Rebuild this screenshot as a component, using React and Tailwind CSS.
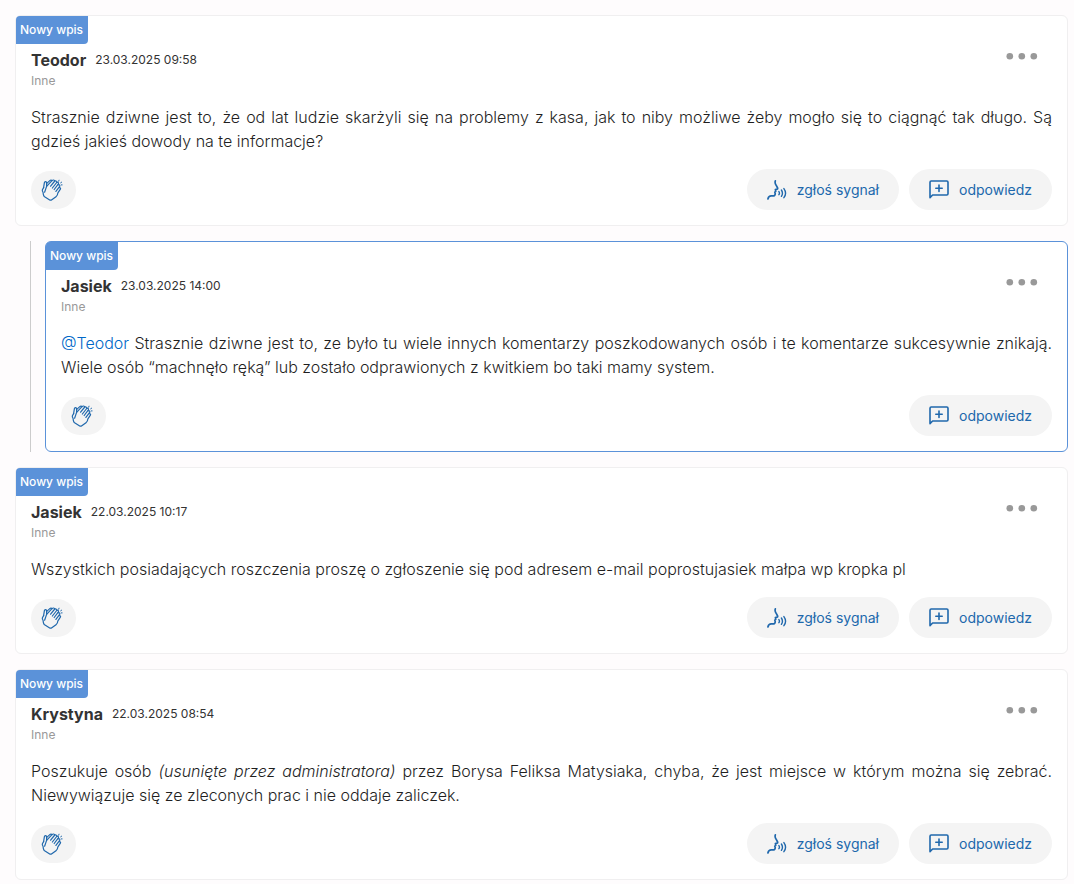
import React from "react";

function ClapIcon() {
  return (
    <svg width="24" height="24" viewBox="0 0 24 24" fill="none" stroke="#2068ac" strokeWidth="1.2" strokeLinecap="round" strokeLinejoin="round" aria-hidden="true">
      <path d="M3.6 9.6 4.4 4.6c.2-1.4 2.2-1.3 2.2.2v3.6L4.6 14.2" />
      <path d="M6.5 5.6 9.8 2.6c.8-.7 1.7-.6 2.2.1 1-1.1 2.5-.8 2.8.3 1.2-.5 2.2.3 1.9 1.5" />
      <path d="M6.6 8.4 12 2.7M10.6 8.2l4.2-5.2M12.4 10l4.3-5.5c1-.8 2.3.2 1.7 1.4l-4.2 5.6" />
      <path d="M18.1 6.9c1.1-.7 2.2.3 1.6 1.5l-3.8 5M19 9.8c1-.6 2 .4 1.4 1.4l-2.5 3.6c-.1 1.6-.7 3-1.9 3.9l-4.2 3.1c-.8.6-1.4.6-2.1.1L4.6 18.8c-.8-.6-1.1-1.3-1.2-2.2L3 14.2c-.7-.8-.9-1.6-.6-2.5l1.2-2.1" />
      <path d="M18.7 3.2l.3-1M20.7 4.8l.9-.6M21.3 6.9h.8" strokeWidth="1" />
    </svg>
  );
}

function SpeakIcon() {
  return (
    <svg width="20" height="20" viewBox="0 0 20 20" fill="none" stroke="#2068ac" strokeWidth="1.7" strokeLinecap="round" strokeLinejoin="round" aria-hidden="true">
      <path d="M8.3.9c-.5 1.7-.2 3 .8 4.3L10.6 8c.2.6 0 .9-.6 1.1l-1.6.5.4 1.7-1 .8.4 1.3c.1 1.7-.8 2.5-2.3 2.5H4.2c-1.8 0-2.8 1-3.3 3.1" />
      <path d="M11.9 11.6c.7 1 .7 2.1 0 3.1M14.4 10c1.4 2.1 1.4 4.2 0 6.3M16.9 8.6c2.2 3 2.2 6.1 0 9.1" strokeWidth="1.4" />
    </svg>
  );
}

function ReplyIcon() {
  return (
    <svg width="20" height="20" viewBox="0 0 20 20" fill="none" stroke="#2068ac" strokeWidth="1.6" strokeLinecap="round" strokeLinejoin="round" aria-hidden="true">
      <path d="M1 17.6V2.2c0-.8.4-1.2 1.2-1.2h15.6c.8 0 1.2.4 1.2 1.2v11.6c0 .8-.4 1.2-1.2 1.2H3.6z" />
      <path d="M10 5v6.4M6.8 8.2h6.4" />
    </svg>
  );
}

function ActionButton({ icon, children }) {
  return (
    <button type="button" className="flex h-[41px] items-center gap-2.5 rounded-full bg-[#f4f4f4] px-5 text-sm text-[#2068ac]">
      {icon}
      <span>{children}</span>
    </button>
  );
}

function Post({ author, date, children, signal = false, reply = false }) {
  return (
    <article className={`rounded-md border bg-white ${reply ? "border-[#5b92d9]" : "border-[#f0eff0]"}`}>
      <div className="flex">
        <span className="h-7 rounded-tl rounded-br bg-[#5b92d9] pr-[5px] pl-1 text-[12px] leading-7 font-medium text-white">Nowy wpis</span>
      </div>
      <div className="px-[15px] pt-1 pb-[15px]">
        <header className="flex items-start justify-between">
          <div>
            <div className="flex items-center gap-[9px] leading-6">
              <h2 className="text-base leading-6 font-bold text-[#333]">{author}</h2>
              <time className="text-[12px] leading-6">{date}</time>
            </div>
            <p className="text-[12px] leading-[18px] text-[#999]">Inne</p>
          </div>
          <button type="button" aria-label="Więcej opcji" className="mr-[14px] flex h-4 items-center">
            <svg width="32" height="8" viewBox="0 0 32 8" fill="#999" aria-hidden="true">
              <circle cx="3.8" cy="4.2" r="3.3" />
              <circle cx="15.8" cy="4.2" r="3.3" />
              <circle cx="27.8" cy="4.2" r="3.3" />
            </svg>
          </button>
        </header>
        <p className="mt-[15px] text-justify text-base leading-6 font-[350] text-[#1f1f1f]">{children}</p>
        <footer className="mt-4 flex items-center justify-between">
          <button type="button" aria-label="Brawo" className="flex h-[38px] w-[45px] items-center rounded-full bg-[#f4f4f4] pl-[9px]">
            <ClapIcon />
          </button>
          <div className="flex gap-2.5">
            {signal && <ActionButton icon={<SpeakIcon />}>zgłoś sygnał</ActionButton>}
            <ActionButton icon={<ReplyIcon />}>odpowiedz</ActionButton>
          </div>
        </footer>
      </div>
    </article>
  );
}

export default function App() {
  return (
    <main className="flex min-h-screen flex-col gap-[15px] bg-[#fefcfd] pt-[15px] pr-1.5 pb-1 pl-[15px] font-['Inter',sans-serif] text-[#333]">
      <Post author="Teodor" date="23.03.2025 09:58" signal>
        Strasznie dziwne jest to, że od lat ludzie skarżyli się na problemy z kasa, jak to niby możliwe żeby mogło się to ciągnąć tak długo. Są gdzieś jakieś dowody na te informacje?
      </Post>
      <div className="ml-[15px] border-l border-[#ccc] pl-[14px]">
        <Post author="Jasiek" date="23.03.2025 14:00" reply>
          <a href="#teodor" className="text-[#0068c8]">@Teodor</a> Strasznie dziwne jest to, ze było tu wiele innych komentarzy poszkodowanych osób i te komentarze sukcesywnie znikają. Wiele osób “machnęło ręką” lub zostało odprawionych z kwitkiem bo taki mamy system.
        </Post>
      </div>
      <Post author="Jasiek" date="22.03.2025 10:17" signal>
        Wszystkich posiadających roszczenia proszę o zgłoszenie się pod adresem e-mail poprostujasiek małpa wp kropka pl
      </Post>
      <Post author="Krystyna" date="22.03.2025 08:54" signal>
        Poszukuje osób <em>(usunięte przez administratora)</em> przez Borysa Feliksa Matysiaka, chyba, że jest miejsce w którym można się zebrać. Niewywiązuje się ze zleconych prac i nie oddaje zaliczek.
      </Post>
    </main>
  );
}
